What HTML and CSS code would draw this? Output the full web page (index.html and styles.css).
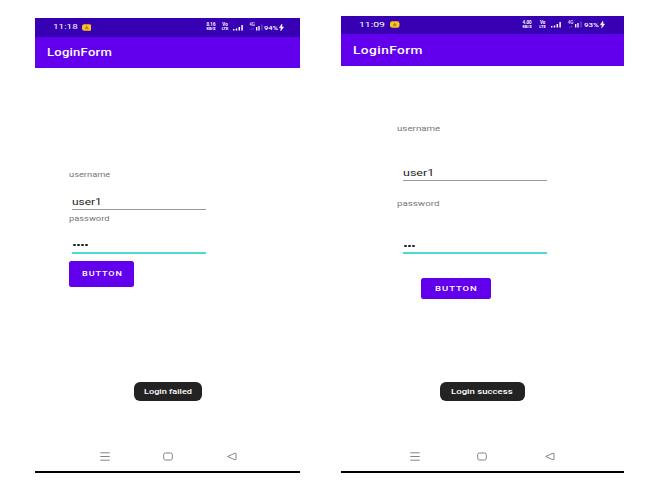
FILE: index.html
```html
<!DOCTYPE html>
<html lang="en">
<head>
<meta charset="utf-8">
<title>LoginForm</title>
<link rel="stylesheet" href="styles.css">
</head>
<body>
<main class="screens">
  <section class="phone failed">
    <header class="status">
      <span class="time"><span class="wide">11:18</span></span>
      <svg class="badge" viewBox="0 0 10 7"><rect width="10" height="7" rx="2.5" fill="#fbc51b"/><path d="M3 4.7h4M3.5 3.5h3M4.3 2.3h1.4" stroke="#98701b" stroke-width=".8"/></svg>
      <span class="rate"><b>0.16</b><b>KB/S</b></span>
      <span class="rate volte"><b>Vo</b><b>LTE</b></span>
      <svg class="signal" viewBox="0 0 10 7"><path d="M.7 5v1.5M3.5 4.5v2M6.3 3v3.5M9.1 1v5.5" stroke="#fff" stroke-width="1.5"/></svg>
      <span class="rate net"><b>4G</b><b>↓↑</b></span>
      <svg class="signal small" viewBox="0 0 7 7"><path d="M.7 3v3.5M3 2v4.5" stroke="#fff" stroke-width="1.3"/><path d="M6 .5v6" stroke="#a58bdc" stroke-width=".7"/></svg>
      <span class="charge"><span class="wide">94%</span></span>
      <svg class="bolt" viewBox="0 0 5 8"><path d="M3 0 0 4.3h2L1.5 8 5 3.4H3z" fill="#fff" stroke="#fff" stroke-width=".5"/></svg>
    </header>
    <div class="appbar"><h1 class="wide">LoginForm</h1></div>
    <form class="form">
      <label class="label"><span class="wide">username</span></label>
      <div class="field"><span class="wide">user1</span></div>
      <label class="label second"><span class="wide">password</span></label>
      <div class="field focused"><i></i><i></i><i></i><i></i></div>
      <button class="button" type="button"><span class="wide">BUTTON</span></button>
    </form>
    <div class="toast"><span class="wide">Login failed</span></div>
    <nav class="nav">
      <svg viewBox="0 0 10 9"><path d="M.3 .8h9.4M.3 4.5h9.4M.3 8.2h9.4"/></svg>
      <svg viewBox="0 0 10 9"><rect x=".7" y="1" width="8.6" height="7" rx="1.8"/></svg>
      <svg viewBox="0 0 10 9"><path d="M.6 4.5 8 1.2q1-.3 1 .6v5.4q0 .9-1 .6z"/></svg>
    </nav>
  </section>

  <section class="phone success">
    <header class="status">
      <span class="time"><span class="wide">11:09</span></span>
      <svg class="badge" viewBox="0 0 10 7"><rect width="10" height="7" rx="2.5" fill="#fbc51b"/><path d="M3 4.7h4M3.5 3.5h3M4.3 2.3h1.4" stroke="#98701b" stroke-width=".8"/></svg>
      <span class="rate"><b>4.00</b><b>KB/S</b></span>
      <span class="rate volte"><b>Vo</b><b>LTE</b></span>
      <svg class="signal" viewBox="0 0 10 7"><path d="M.7 5v1.5M3.5 4.5v2M6.3 3v3.5M9.1 1v5.5" stroke="#fff" stroke-width="1.5"/></svg>
      <span class="rate net"><b>4G</b><b>↓↑</b></span>
      <svg class="signal small" viewBox="0 0 7 7"><path d="M.7 3v3.5M3 2v4.5" stroke="#fff" stroke-width="1.3"/><path d="M6 .5v6" stroke="#a58bdc" stroke-width=".7"/></svg>
      <span class="charge"><span class="wide">93%</span></span>
      <svg class="bolt" viewBox="0 0 5 8"><path d="M3 0 0 4.3h2L1.5 8 5 3.4H3z" fill="#fff" stroke="#fff" stroke-width=".5"/></svg>
    </header>
    <div class="appbar"><h1 class="wide">LoginForm</h1></div>
    <form class="form">
      <label class="label"><span class="wide">username</span></label>
      <div class="field"><span class="wide">user1</span></div>
      <label class="label second"><span class="wide">password</span></label>
      <div class="field focused"><i></i><i></i><i></i></div>
      <button class="button" type="button"><span class="wide">BUTTON</span></button>
    </form>
    <div class="toast"><span class="wide">Login success</span></div>
    <nav class="nav">
      <svg viewBox="0 0 10 9"><path d="M.3 .8h9.4M.3 4.5h9.4M.3 8.2h9.4"/></svg>
      <svg viewBox="0 0 10 9"><rect x=".7" y="1" width="8.6" height="7" rx="1.8"/></svg>
      <svg viewBox="0 0 10 9"><path d="M.6 4.5 8 1.2q1-.3 1 .6v5.4q0 .9-1 .6z"/></svg>
    </nav>
  </section>
</main>
</body>
</html>
```
FILE: styles.css
```css
* { box-sizing: border-box; }

body {
  margin: 0;
  background: #fff;
  font-family: Roboto, "Liberation Sans", sans-serif;
}

.screens {
  display: flex;
  align-items: flex-end;
  gap: 40.2px;
  height: 473px;
  padding-left: 35px;
}

.phone {
  display: flex;
  flex-direction: column;
  flex: none;
  border-bottom: 2px solid #000;
}

.failed { --stretch: 1.24; width: 265.4px; height: 455px; }
.success { --stretch: 1.3; width: 283px; height: 457.5px; }

/* Glyphs are widened to follow each screen's horizontal stretch. */
.wide {
  display: inline-block;
  white-space: nowrap;
  transform: scaleX(var(--stretch));
  transform-origin: left center;
}

.status {
  display: flex;
  align-items: center;
  flex: none;
  height: 18.5px;
  padding-left: 17.5px;
  background: #3700b3;
  color: #fff;
}

.time { width: 29px; font-size: 8px; line-height: 10px; }
.badge { width: 9.5px; height: 7px; }

.rate {
  display: flex;
  flex-direction: column;
  align-items: center;
  width: 12px;
  margin-left: 114px;
  font-size: 4.5px;
  line-height: 4px;
}
.rate b { font-weight: 700; }
.rate b + b { font-size: 4px; }
.volte { width: 10px; margin-left: 3px; }
.net { width: 8px; margin-left: 5px; color: #d3c7ee; }
.signal { width: 10px; height: 7px; margin-left: 3px; }
.signal.small { width: 7px; margin-left: 0; }
.charge { width: 15.5px; margin-left: .5px; font-size: 6.1px; font-weight: 500; line-height: 9px; }
.bolt { width: 5px; height: 7px; }

.success .time { width: 31px; font-size: 8px; }
.success .status { padding-left: 18.5px; }
.success .rate { margin-left: 121px; width: 13px; }
.success .volte { margin-left: 4px; width: 10px; }
.success .net { margin-left: 6px; width: 8px; }
.success .charge { margin-left: 2px; width: 16.5px; }

.appbar {
  display: flex;
  align-items: center;
  flex: none;
  height: 31.5px;
  padding: 1.5px 0 0 12px;
  background: #6200ee;
  color: #fff;
}
.appbar h1 {
  margin: 0;
  font-size: 10.5px;
  font-weight: 500;
  line-height: 14px;
  letter-spacing: .2px;
}
.success .appbar h1 { letter-spacing: .35px; }

.form {
  display: flex;
  flex-direction: column;
  align-items: flex-start;
  flex: none;
  height: 314px;
  padding: 102px 0 0 34px;
}

.label { height: 10px; color: #777; font-size: 7.5px; line-height: 10px; }

.field {
  display: flex;
  align-items: flex-start;
  width: 134px;
  height: 15px;
  margin: 14.5px 0 0 3px;
  border-bottom: 1px solid #999;
  color: #222;
  font-size: 9.6px;
  line-height: 13px;
}
.second { margin-top: 4.5px; }
.field.focused {
  align-items: flex-start;
  gap: 1.6px;
  height: 16px;
  padding: 6.5px 0 0 1px;
  margin-top: 13.5px;
  border-bottom: 2px solid #4adcd2;
}
.focused i { width: 2.5px; height: 2.2px; border-radius: 1px; background: #222; }

.button {
  width: 65px;
  height: 26.5px;
  margin-top: 7px;
  padding: 0 0 0 12.7px;
  border: 0;
  border-radius: 2.5px;
  background: #6200ee;
  color: #fff;
  font: 500 7.3px/10px Roboto, sans-serif;
  letter-spacing: .75px;
  text-align: left;
}

.success .form { padding: 58px 0 0 56.5px; height: 316px; }
.success .field { width: 143.5px; margin: 32.5px 0 0 6px; }
.success .second { margin-top: 18px; }
.success .field.focused { margin-top: 29px; }
.success .button { width: 69.5px; height: 21px; margin: 24px 0 0 24px; padding-left: 13.5px; }

.toast {
  display: flex;
  align-items: center;
  flex: none;
  width: 68.5px;
  height: 19px;
  margin-left: 98.5px;
  padding: 1px 0 0 10.5px;
  border-radius: 6px;
  background: #232323;
  color: #fff;
  font-size: 7.4px;
  font-weight: 500;
  line-height: 10px;
}
.success .toast { width: 85px; margin-left: 99px; padding-left: 11px; }

.nav {
  display: flex;
  align-items: center;
  gap: 53.5px;
  margin: 50.5px 0 0 64.5px;
}
.nav svg {
  flex: none;
  width: 10px;
  height: 9px;
  fill: none;
  stroke: #777;
  stroke-width: .9;
}
.success .nav { gap: 57.5px; margin: 51px 0 0 69px; }
```
